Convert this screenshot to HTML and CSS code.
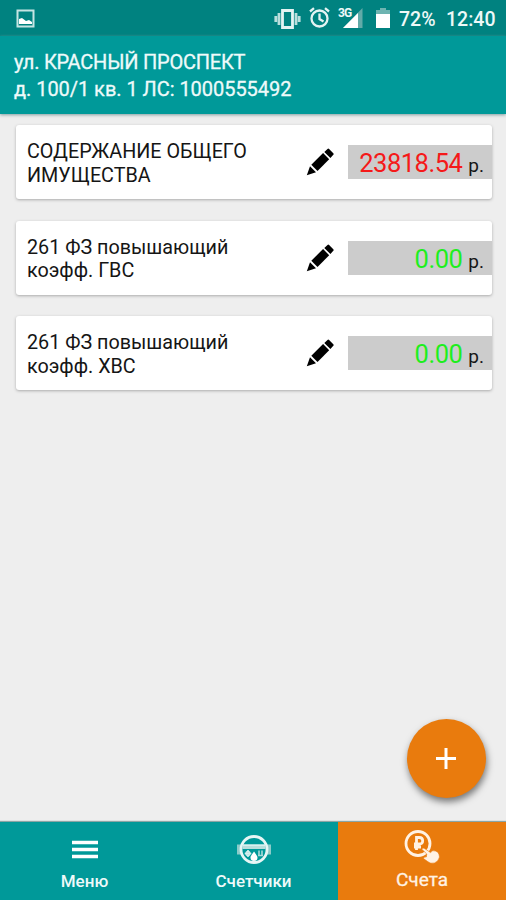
FILE: index.html
```html
<!DOCTYPE html>
<html lang="ru">
<head>
<meta charset="utf-8">
<title>Счета</title>
<link rel="stylesheet" href="styles.css">
</head>
<body>
<svg class="defs" width="0" height="0">
  <symbol id="pencil" viewBox="0 0 28 28">
    <path d="M.8 27.2 4 18.2l6 6z"/>
    <path d="m5.3 16.7 11.8-11.6 6.1 6.2L11.5 23z"/>
    <path d="m18.3 3.9 3.2-3q.8-.7 1.6 0l4.2 4.3q.8.8 0 1.6l-2.9 3.3z"/>
  </symbol>
</svg>
<div class="app">
  <div class="status">
    <svg class="picture" width="19" height="19" viewBox="0 0 19 19"><path d="M1.500 1.500h16v16h-16z" fill="none" stroke="#c5e5e3" stroke-width="2"/><path d="M3 15v-5l3-1 4 3 3-1 3 2v2z" fill="#fff"/></svg>
    <div class="status-right">
      <svg class="vibrate" width="27" height="20" viewBox="0 0 27 20"><path d="M8.500 1.500h10v17h-10z" fill="none" stroke="#e3f3f2" stroke-width="2.800"/><path d="M5 4v12M22 4v12M1.800 7v6M25.200 7v6" stroke="#b9dedc" stroke-width="2.800"/></svg>
      <svg class="alarm" width="21" height="21" viewBox="0 0 21 21"><g fill="none" stroke="#e3f3f2" stroke-width="2.300"><circle cx="10.500" cy="11.500" r="8"/><path d="M10.500 6.500v5.500l4 2.500M1 4.500l4-3.300M20 4.500l-4-3.300"/></g></svg>
      <span class="signal"><span class="g">3G</span><svg width="26" height="21" viewBox="0 0 26 21"><path d="M5 20 24.500 0v20z" fill="#62aaa8"/><path d="M5 20 20 5v15z" fill="#fff"/></svg></span>
      <svg class="battery" width="14" height="20" viewBox="0 0 14 20"><path d="M0 2h4V0h6v2h4v5H0z" fill="#6eb4b1"/><path d="M0 6h14v14H0z" fill="#fff"/></svg>
      <span class="percent">72%</span>
      <span class="clock">12:40</span>
    </div>
  </div>
  <header class="header">
    <div class="line-one">ул. КРАСНЫЙ ПРОСПЕКТ</div>
    <div class="line-two">д. 100/1 кв. 1 ЛС: 1000555492</div>
  </header>
  <main class="content">
    <div class="card">
      <div class="name">СОДЕРЖАНИЕ ОБЩЕГО<br>ИМУЩЕСТВА</div>
      <svg class="pencil"><use href="#pencil"/></svg>
      <div class="amount debt"><span class="sum">23818.54</span><span class="cur">р.</span></div>
    </div>
    <div class="card">
      <div class="name">261 ФЗ повышающий<br>коэфф. ГВС</div>
      <svg class="pencil"><use href="#pencil"/></svg>
      <div class="amount"><span class="sum">0.00</span><span class="cur">р.</span></div>
    </div>
    <div class="card">
      <div class="name">261 ФЗ повышающий<br>коэфф. ХВС</div>
      <svg class="pencil"><use href="#pencil"/></svg>
      <div class="amount"><span class="sum">0.00</span><span class="cur">р.</span></div>
    </div>
    <button class="fab" aria-label="Добавить"><svg width="21" height="21" viewBox="0 0 21 21"><path d="M10 0v21M0 10.500h20" stroke="#fff" stroke-width="3"/></svg></button>
  </main>
  <nav class="nav">
    <div class="tab">
      <svg class="icon" width="28" height="30" viewBox="0 0 28 30"><path d="M1 7.500h26M1 14.500h26M1 21.500h26" stroke="#fff" stroke-width="3.600"/></svg>
      <span>Меню</span>
    </div>
    <div class="tab">
      <svg class="icon" width="36" height="30" viewBox="0 0 36 30"><path d="M5 9.500H1v10h4M31 9.500h4v10h-4" fill="#8ccbc9"/><circle cx="18" cy="14.500" r="13" fill="#099" stroke="#e6f6f5" stroke-width="2.800"/><path d="M6.500 10h23v4h-23z" fill="#b9dedc"/><path d="M7 10h22" stroke="#e6f6f5" stroke-width="1.400"/><path d="M18 16.500c3 4.200 3.500 5 3.500 6a3.500 3.500 0 0 1-7 0c0-1 .5-1.800 3.500-6z" fill="#fff"/><path d="M12 15v7M8.700 18.500h6.600" stroke="#d5eeed" stroke-width="1.600"/><circle cx="12" cy="18.500" r="2" fill="none" stroke="#d5eeed" stroke-width="1.300"/><path d="M23 15.500v5.500M26 15.500v5.500M22 20.500h5" stroke="#a8d8d6" stroke-width="1.600"/></svg>
      <span>Счетчики</span>
    </div>
    <div class="tab active">
      <svg class="icon" width="36" height="34" viewBox="0 0 36 34"><circle cx="14" cy="13.500" r="12" fill="none" stroke="#fff2e4" stroke-width="2.800"/><path d="M12.500 20V7.500h2.700q3.500 0 3.500 3.300t-3.500 3.200H10M10 17h7" fill="none" stroke="#fff2e4" stroke-width="2.800"/><path d="m17.800 19.200q.8-1.800 2.700-.8l6 4.200q2-3 5-1.600 3 .8 3.500 3.500l.5 2.500q-1 4.500-5 6-4 1-6.500-1.200l-4.500-3.200q.3-2.200 2.800-1.600l.5-3z" fill="#fff2e4" stroke="#e97b0d" stroke-width=".6"/></svg>
      <span>Счета</span>
    </div>
  </nav>
</div>
</body>
</html>
```
FILE: styles.css
```css
* { box-sizing: border-box; }
body { margin: 0; font-family: Roboto, "Liberation Sans", sans-serif; }
.defs { display: block; height: 0; }
.app { width: 506px; height: 900px; display: flex; flex-direction: column; background: #eee; overflow: hidden; }
.status { height: 36px; background: #008280; color: #eef9f8; display: flex; align-items: flex-start; justify-content: space-between; padding: 9px 10px 0 16px; flex: none; }
.status-right { display: flex; align-items: flex-start; font-size: 19.500px; font-weight: 500; line-height: 21px; white-space: nowrap; }
.vibrate { margin-right: 8px; }
.alarm { margin: -2px 8px 0 0; }
.signal { position: relative; height: 21px; margin-right: 12px; }
.signal svg { display: block; margin-top: -1px; }
.g { position: absolute; left: 0; top: -2px; font-size: 12px; line-height: 13px; font-weight: 700; letter-spacing: -1px; }
.battery { margin: -1px 9px 0 0; }
.percent { width: 37px; margin-right: 10px; }
.clock { width: 50px; }
.header { height: 78px; flex: none; background: #099; color: #eefafa; padding: 13px 14px 0; font-size: 20px; line-height: 27px; white-space: nowrap; box-shadow: 0 1px 3px #829da0; -webkit-text-stroke: .3px #eefafa; }
.line-one { letter-spacing: -.23px; }
.line-two { letter-spacing: -.04px; }
.content { flex: 1; position: relative; display: flex; flex-direction: column; gap: 21.500px; padding: 11px 14px 0 16px; }
.card { height: 74px; flex: none; background: #fff; border-radius: 3px; box-shadow: 0 1px 3px #aaa; display: flex; align-items: flex-start; overflow: hidden; }
.name { width: 290px; padding: 15px 0 0 11px; font-size: 19.750px; line-height: 23.500px; color: #151515; white-space: nowrap; }
.pencil { width: 28px; height: 28px; margin: 23px 14px 0 0; flex: none; }
.amount { flex: 1; height: 34px; margin-top: 20px; padding-right: 8px; background: #ccc; display: flex; justify-content: flex-end; align-items: baseline; line-height: 37px; white-space: nowrap; color: #1eee1e; }
.debt { color: #f51919; }
.sum { font-size: 25.500px; letter-spacing: -.5px; }
.cur { font-size: 19px; color: #161616; margin-left: 6px; }
.fab { position: absolute; right: 20px; bottom: 24px; width: 79px; height: 79px; border: 0; border-radius: 50%; padding: 0; background: #e97b0d; box-shadow: 1px 4px 7px #777; display: grid; place-items: center; }
.nav { height: 78px; flex: none; display: grid; grid-template-columns: 169px 169px 168px; background: #099; box-shadow: 0 -1px 1px #8aa5a5; }
.tab { display: flex; flex-direction: column; align-items: center; padding-top: 13px; color: #eefafa; font-size: 17px; font-weight: 500; line-height: 22px; }
.tab span { margin-top: 5px; }
.active { background: #e97b0d; color: #fff2e4; padding-top: 8px; font-size: 19px; font-weight: 400; -webkit-text-stroke: .3px #fff2e4; }
```
